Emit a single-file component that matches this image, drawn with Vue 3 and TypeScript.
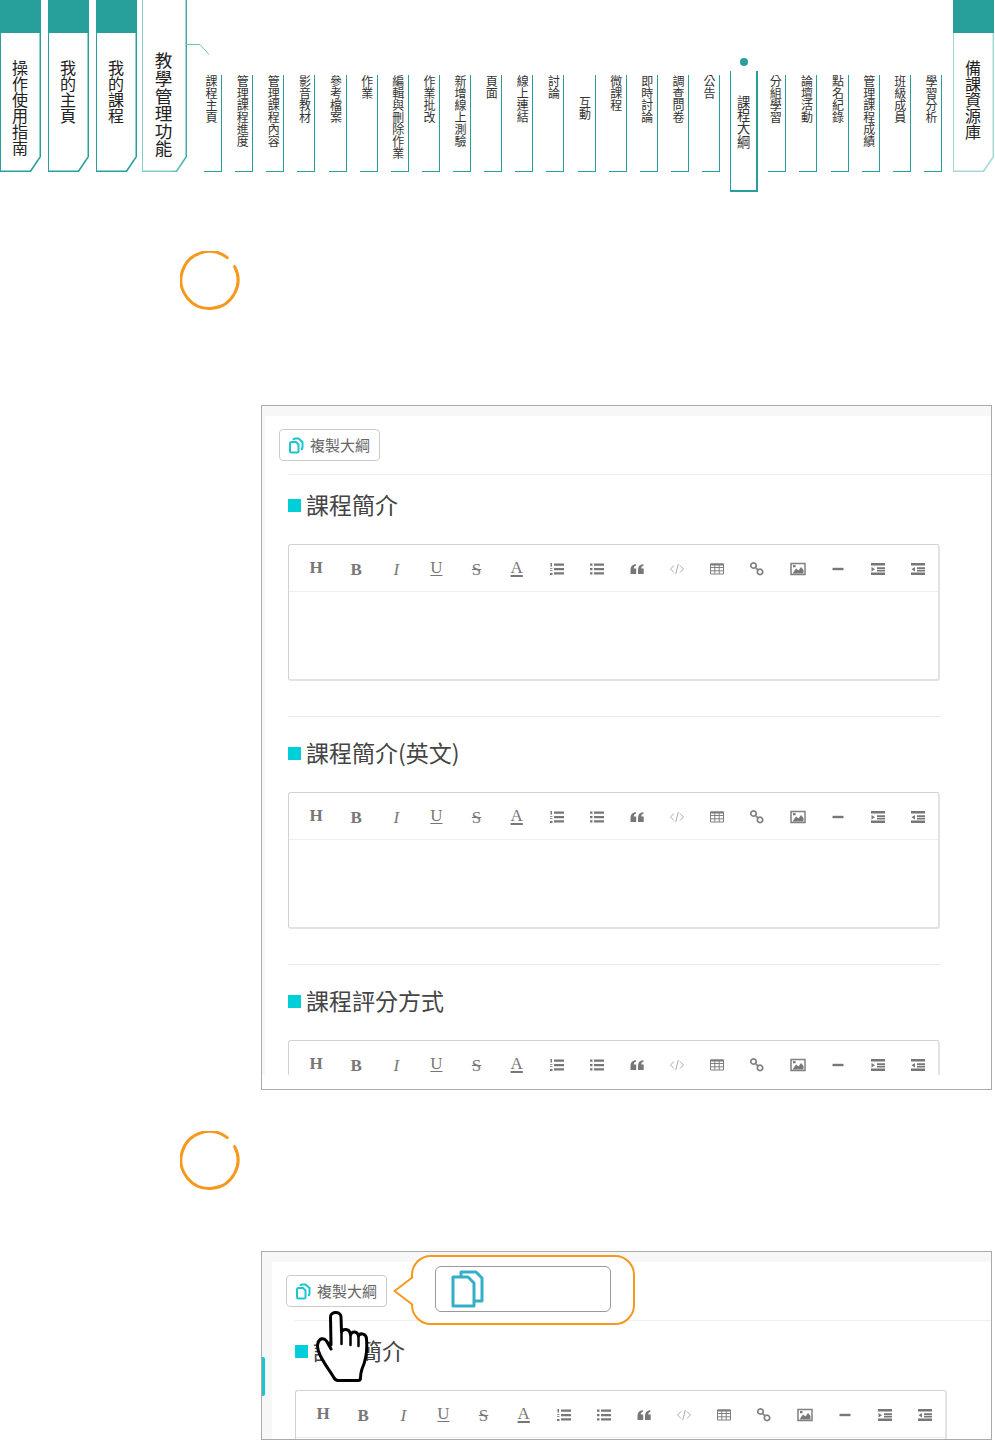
<template>
  <div class="page">
    <nav class="nav">
      <a class="tab">操作使用指南</a>
      <a class="tab">我的主頁</a>
      <a class="tab">我的課程</a>
      <a class="tab tab--open">教學管理功能</a>
      <svg class="nav-link" width="24" height="12" viewBox="0 0 24 12">
        <path d="M0 1.500H14L23 11.500" fill="none" stroke="#6fc1bd" />
      </svg>
      <ul class="subs">
        <li v-for="item in subItems" :key="item" class="sub" :class="subClass(item)">
          <span class="sub-text">{{ item }}</span>
        </li>
      </ul>
      <a class="tab tab--last">備課資源庫</a>
    </nav>

    <template v-for="shot in shots" :key="shot.id">
      <svg class="step" :class="`step--${shot.id}`" width="60" height="60" viewBox="0 0 60 60">
        <path d="M47.2 6.7A28.5 28.5 0 1 0 54.6 15.6" fill="none" stroke="#f7981d" stroke-width="3" stroke-linecap="round" />
      </svg>

      <div class="shot" :class="`shot--${shot.id}`">
        <div class="view">
          <button class="copy-btn" type="button">
            <svg width="16" height="17" viewBox="0 0 16 17" fill="none" stroke="#1cc6cf" stroke-width="2">
              <path d="M2 6.5C2 5.6 2.6 5 3.5 5H8L10.5 7.5V14C10.5 15 10 15.5 9 15.5H3.5C2.6 15.5 2 15 2 14Z" />
              <path d="M5.5 3C5.5 2 6 1.5 7 1.5H10.5L14.500 5V10.500C14.500 11.500 14 12.200 13 12.400" />
            </svg>
            <span class="copy-label">複製大綱</span>
          </button>
          <div class="rule"></div>

          <section v-for="title in shot.sections" :key="title" class="section">
            <h2 class="title"><i class="title-mark"></i>{{ title }}</h2>
            <div class="editor">
              <div class="toolbar">
                <span v-for="tool in tools" :key="tool.name" class="tool">
                  <span v-if="tool.label" class="tool-text" :class="`tool-text--${tool.name}`">{{ tool.label }}</span>
                  <svg v-else width="16" height="16" viewBox="0 0 16 16">
                    <path v-if="tool.fill" :d="tool.fill" fill="#777" />
                    <path v-if="tool.line" :d="tool.line" fill="none" :stroke="tool.name === 'code' ? '#aaa' : '#808080'" :stroke-width="tool.width ?? 1" />
                  </svg>
                </span>
              </div>
            </div>
          </section>
        </div>

        <template v-if="shot.demo">
          <i class="side-bar"></i>
          <div class="callout">
            <svg class="callout-tail" width="22" height="30" viewBox="0 0 22 30">
              <path d="M20 1L1.500 15L20 29H22V1Z" fill="#fff" />
              <path d="M20 1L1.500 15L20 29" fill="none" stroke="#f7981d" stroke-width="2" />
            </svg>
            <div class="callout-field">
              <svg width="34" height="38" viewBox="0 0 34 38" fill="#fff" stroke="#33b0c8" stroke-width="3" stroke-linejoin="round">
                <path d="M10 2H25L31 8V31H10Z" />
                <path d="M2 7H17L23 13V36H2Z" />
              </svg>
            </div>
          </div>
          <svg class="hand" width="54" height="72" viewBox="0 0 54 72">
            <path
              d="M15 34L14.500 6C14.500 0 25 0 25 6L25.500 21C27 17.500 33 17.500 34 22L34.500 24C36 19.500 41.500 20 42.500 25C44 21.500 50.500 22.500 50.500 28C51.500 39 50 49 46 58C45 61 44.500 64 44.500 67C44.500 68.500 43.500 69.500 42 69.500H22C20 69.500 18.500 68 17.500 66C14 60 9 54 4.500 45C2 40.500 0.500 37 2 32C3.500 27 8 26.500 10.500 30L15 38"
              fill="#fff"
              stroke="#000"
              stroke-width="3"
              stroke-linejoin="round"
              stroke-linecap="round"
            />
            <path d="M25.500 21V33M34.500 24V34M42.500 25V35" fill="none" stroke="#000" stroke-width="2.500" stroke-linecap="round" />
          </svg>
        </template>
      </div>
    </template>
  </div>
</template>

<script setup lang="ts">
interface Tool {
  name: string
  label?: string
  fill?: string
  line?: string
  width?: number
}

interface Shot {
  id: string
  demo: boolean
  sections: string[]
}

const subItems = [
  '課程主頁', '管理課程進度', '管理課程內容', '影音教材', '參考檔案', '作業',
  '編輯與刪除作業', '作業批改', '新增線上測驗', '頁面', '線上連結', '討論',
  '互動', '微課程', '即時討論', '調查問卷', '公告', '課程大綱',
  '分組學習', '論壇活動', '點名紀錄', '管理課程成績', '班級成員', '學習分析'
]

const subClass = (item: string) => ({
  'sub--active': item === '課程大綱',
  'sub--low': item === '互動'
})

const lines = 'M5 2.500h10v2.300H5zM5 6.900h10v2.300H5zM5 11.300h10v2.300H5z'

const tools: Tool[] = [
  { name: 'h', label: 'H' },
  { name: 'b', label: 'B' },
  { name: 'i', label: 'I' },
  { name: 'u', label: 'U' },
  { name: 's', label: 'S' },
  { name: 'a', label: 'A' },
  { name: 'ol', fill: `${lines}M1.500 2h1.500v3.500H1.500zM1 7h2.500v.8H1zM1 9h2.500v.8H1zM1 12h2.500v2H1z` },
  { name: 'ul', fill: `${lines}M1 2.500h2.500v2.300H1zM1 6.900h2.500v2.300H1zM1 11.300h2.500v2.300H1z` },
  { name: 'quote', fill: 'M1.500 13V8.500C1.500 5.500 3.500 3.500 6.800 3V5C5.300 5.300 4.800 6.200 4.800 7.500H7.200V13ZM9 13V8.500C9 5.500 11 3.500 14.300 3V5C12.800 5.300 12.300 6.200 12.300 7.500H14.700V13Z' },
  { name: 'code', line: 'M5 4.500L1.500 8L5 11.500M11 4.500L14.500 8L11 11.500M9.300 3L6.700 13' },
  { name: 'table', fill: 'M1.500 2.500h13v2h-13z', line: 'M1.500 3H14.500V13H1.500ZM1.500 6.500H14.500M1.500 9.800H14.500M5.800 3V13M10.200 3V13' },
  { name: 'link', line: 'M4.500 1.800a2.700 2.700 0 1 0 .01 0ZM11 8.200a2.700 2.700 0 1 0 .01 0ZM6.500 6.300L9 9', width: 1.7 },
  { name: 'image', fill: 'M2.500 12.500L6 7.500L8.500 9.500L11 6L13.500 9V12.500ZM3 4h2.500v2.200H3z', line: 'M1 2.500H15V13.500H1Z', width: 1.5 },
  { name: 'hr', fill: 'M2.500 6.800h11v2.400h-11z' },
  { name: 'indent', fill: 'M1 2h14v2.500H1zM7 6.200h8v1.700H7zM1 11.500h14v2.500H1zM7 8.700h8v1.700H7zM1.500 6l3.500 2.200L1.500 10.400z' },
  { name: 'outdent', fill: 'M1 2h14v2.500H1zM7 6.200h8v1.700H7zM1 11.500h14v2.500H1zM7 8.700h8v1.700H7zM5 6L1.500 8.200L5 10.400z' }
]

const shots: Shot[] = [
  { id: 'full', demo: false, sections: ['課程簡介', '課程簡介(英文)', '課程評分方式'] },
  { id: 'demo', demo: true, sections: ['課程簡介'] }
]
</script>

<style>
html,
body {
  background: #fff;
}
</style>

<style scoped>
.page {
  width: 995px;
  height: 1440px;
  overflow: hidden;
  font-family: "Noto Sans CJK TC", "Noto Sans", sans-serif;
  color: #333;
}

.nav {
  position: relative;
  display: flex;
  align-items: flex-start;
  height: 192px;
}

.tab {
  flex: none;
  width: 41px;
  height: 172px;
  margin-right: 7px;
  padding: 33px 2px 1.5px 0;
  box-sizing: border-box;
  background: #27a09c;
  clip-path: polygon(0 0, 100% 0, 100% calc(100% - 15px), calc(100% - 10px) 100%, 0 100%);
  position: relative;
  writing-mode: vertical-rl;
  font-size: 16px;
  line-height: 39px;
  color: #222;
  text-indent: 27px;
  isolation: isolate;
}

.tab::before {
  content: "";
  position: absolute;
  z-index: -1;
  top: 33px;
  left: 1px;
  right: 1.5px;
  bottom: 1.5px;
  background: #fff;
  clip-path: polygon(0 0, 100% 0, 100% calc(100% - 14px), calc(100% - 9.500px) 100%, 0 100%);
}

.tab--open {
  width: 45px;
  margin-left: -2px;
  margin-right: 0;
  padding: 0 3px 1.5px 0;
  background: linear-gradient(90deg, #86cbc7 60%, #3ea9a5 100%);
  font-size: 17.6px;
  line-height: 42px;
  text-indent: 52px;
}

.tab--open::before {
  top: 0;
}

.tab--last {
  margin: 0;
  background: linear-gradient(#27a09c 33px, #a3dad7 33px);
}

.nav-link {
  position: absolute;
  left: 186px;
  top: 43px;
}

.subs {
  display: flex;
  align-items: flex-start;
  gap: 13.140px;
  flex: none;
  width: 737.500px;
  margin: 0 11.500px 0 17px;
  padding: 0;
  list-style: none;
}

.sub {
  flex: none;
  box-sizing: border-box;
  width: 18px;
  height: 97px;
  margin-top: 75px;
  padding-right: 4px;
  border-right: 1px solid #27a09c;
  border-bottom: 1px solid #27a09c;
  writing-mode: vertical-rl;
  font-size: 12px;
  line-height: 12px;
  color: #333;
}

.sub-text {
  display: block;
}

.sub--low {
  padding-top: 21px;
}

.sub--active {
  position: relative;
  width: 28px;
  height: 121px;
  margin: 71px -3px 0;
  padding: 24px 0 0;
  border-left: 1px solid #27a09c;
  border-right-width: 2px;
  border-bottom-width: 2px;
  font-size: 13.300px;
  line-height: 25px;
}

.sub--active::before {
  content: "";
  position: absolute;
  top: -13px;
  left: 9px;
  width: 8px;
  height: 8px;
  border-radius: 50%;
  background: #27a09c;
}

.step {
  display: block;
  margin: 59px 0 0 179.500px;
}

.step--demo {
  margin-top: 41px;
}

.shot {
  position: relative;
  box-sizing: border-box;
  width: 731px;
  margin: 94px 0 0 261px;
  border: 1px solid #aaa;
  background: #fff;
}

.shot--full {
  height: 685px;
}

.shot--demo {
  height: 189px;
  margin-top: 60px;
}

.view {
  box-sizing: border-box;
  height: 669px;
  overflow: hidden;
  border-top: 10px solid #f7f7f7;
  border-left: 3px solid #f7f7f7;
  background: #fff;
}

.shot--demo .view {
  height: 187px;
  border-left-width: 10px;
}

.copy-btn {
  display: flex;
  align-items: center;
  gap: 6px;
  box-sizing: border-box;
  width: 101px;
  height: 32px;
  margin: 13px 0 0 14px;
  padding: 0 0 0 8px;
  border: 1px solid #ccc;
  border-radius: 4px;
  background: #fff;
  font: inherit;
  font-size: 15px;
  color: #666;
  white-space: nowrap;
}

.copy-label {
  margin-top: -2px;
}

.rule {
  height: 1px;
  margin: 13px 0 13px 23px;
  background: #eee;
}

.section {
  width: 652px;
  margin-left: 23px;
}

.section + .section {
  margin-top: 35px;
  padding-top: 19px;
  border-top: 1px solid #e8e8e8;
}

.title {
  display: flex;
  align-items: center;
  box-sizing: border-box;
  height: 34px;
  margin: 0 0 22px;
  padding-bottom: 2px;
  font-size: 23px;
  font-weight: 400;
  color: #444;
}

.title-mark {
  width: 13px;
  height: 13px;
  margin: 2px 5px 0 0;
  background: #00ced8;
}

.editor {
  box-sizing: border-box;
  height: 137px;
  border: 1px solid #d2d2d2;
  border-right: 2px solid #e2e2e2;
  border-bottom: 2px solid #e2e2e2;
  border-radius: 3px;
}

.toolbar {
  display: flex;
  height: 45px;
  padding: 1px 0 0 7px;
  border-bottom: 1px solid #eee;
}

.tool {
  flex: 1;
  display: flex;
  align-items: center;
  justify-content: center;
}

.tool-text {
  font-family: "Liberation Serif", serif;
  font-size: 17px;
  line-height: 17px;
  color: #777;
}

.tool-text--h {
  font-weight: 700;
  transform: translateY(-1px);
}

.tool-text--b {
  font-weight: 700;
  transform: translateY(1px);
}

.tool-text--i {
  font-style: italic;
  transform: translateY(1px);
}

.tool-text--u {
  text-decoration: underline;
  text-underline-offset: 2px;
  transform: translateY(-1px);
}

.tool-text--s {
  padding: 0 2px;
  text-decoration: line-through;
  transform: translateY(1px);
}

.tool-text--a {
  padding: 0 1px;
  text-decoration: underline 2px;
  text-underline-offset: 2px;
  transform: translateY(-1px);
}

.side-bar {
  position: absolute;
  left: 0;
  top: 105px;
  width: 3px;
  height: 39px;
  background: #19c6cf;
  border-radius: 0 2px 2px 0;
}

.callout {
  position: absolute;
  left: 149px;
  top: 3px;
  box-sizing: border-box;
  width: 224px;
  height: 70px;
  padding: 9px 22px;
  border: 2px solid #f7981d;
  border-radius: 20px;
  background: #fff;
}

.callout-tail {
  position: absolute;
  left: -20px;
  top: 19px;
}

.callout-field {
  box-sizing: border-box;
  width: 176px;
  height: 46px;
  padding: 3px 0 0 15px;
  border: 1px solid #999;
  border-radius: 6px;
}

.hand {
  position: absolute;
  left: 54px;
  top: 59px;
}
</style>
